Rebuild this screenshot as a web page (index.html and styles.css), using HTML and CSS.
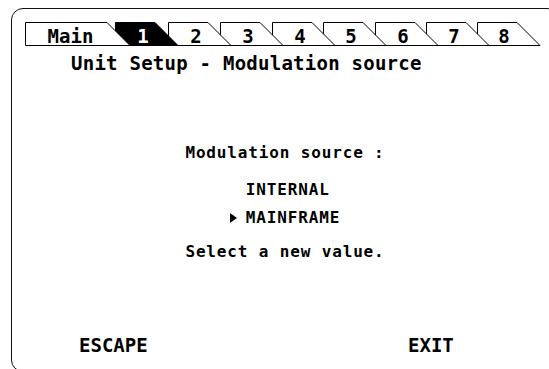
FILE: index.html
```html
<!DOCTYPE html>
<html lang="en">
<head>
    <meta charset="UTF-8">
    <meta name="viewport" content="width=device-width, initial-scale=1.0">
    <title>Unit Setup - Modulation source</title>
    <link rel="stylesheet" href="styles.css">
</head>
<body>
    <div class="screen">
        <!-- tab strip: drawn last-to-first so each tab overlaps the next one -->
        <svg class="tabs" width="530" height="26" viewBox="24 21 530 26">
            <polygon class="tab" points="477.5,45.5 477.5,22.5 517,22.5 540,45.5"/>
            <polygon class="tab" points="426.5,45.5 426.5,22.5 466,22.5 489,45.5"/>
            <polygon class="tab" points="375.5,45.5 375.5,22.5 415,22.5 438,45.5"/>
            <polygon class="tab" points="323.5,45.5 323.5,22.5 363,22.5 386,45.5"/>
            <polygon class="tab" points="272.5,45.5 272.5,22.5 312,22.5 335,45.5"/>
            <polygon class="tab" points="220.5,45.5 220.5,22.5 260,22.5 283,45.5"/>
            <polygon class="tab" points="168.5,45.5 168.5,22.5 208,22.5 231,45.5"/>
            <polygon class="tab tab-active" points="115.5,45.5 115.5,22.5 155,22.5 178,45.5"/>
            <polygon class="tab" points="25.5,45.5 25.5,22.5 107,22.5 130,45.5"/>
            <text class="tab-label" x="70.5" y="43">Main</text>
            <text class="tab-label tab-label-active" x="143" y="43">1</text>
            <text class="tab-label" x="196" y="43">2</text>
            <text class="tab-label" x="248" y="43">3</text>
            <text class="tab-label" x="300" y="43">4</text>
            <text class="tab-label" x="351" y="43">5</text>
            <text class="tab-label" x="403" y="43">6</text>
            <text class="tab-label" x="454" y="43">7</text>
            <text class="tab-label" x="504" y="43">8</text>
        </svg>

        <h1 class="title">Unit Setup - Modulation source</h1>

        <div class="prompt">
            <p class="prompt-label">Modulation source :</p>
            <ul class="options">
                <li><span class="marker"></span>INTERNAL</li>
                <li class="selected"><span class="marker"></span>MAINFRAME</li>
            </ul>
            <p class="prompt-hint">Select a new value.</p>
        </div>

        <div class="softkeys">
            <span>ESCAPE</span>
            <span>EXIT</span>
        </div>
    </div>
</body>
</html>
```

FILE: styles.css
```css
html, body {
    height: 100%;
    overflow: hidden;
}
body {
    margin: 0;
    background: #fff;
    color: #000;
    font-family: "DejaVu Sans Mono", monospace;
    font-weight: bold;
}
.screen {
    margin: 8px 0 0 11px;
    width: 546px;
    height: 362px;
    border: 1px solid #111;
    border-radius: 12px;
}
.tabs {
    display: block;
    margin: 12px 0 0 12px;
}
.tab {
    fill: #fff;
    stroke: #000;
    stroke-width: 1;
}
.tab-active {
    fill: #000;
}
.tab-label {
    font-family: "DejaVu Sans Mono", monospace;
    font-weight: bold;
    font-size: 19px;
    text-anchor: middle;
    fill: #000;
}
.tab-label-active {
    fill: #fff;
}
.title {
    margin: 5px 0 0;
    padding-left: 59px;
    font-size: 19px;
    line-height: 22px;
    letter-spacing: 0.25px;
}
.prompt {
    margin-top: 69px;
    text-align: center;
    font-size: 16px;
    letter-spacing: 0.85px;
}
.prompt-label,
.prompt-hint {
    margin: 0;
    line-height: 20px;
}
.options {
    list-style: none;
    width: fit-content;
    margin: 13px auto 0;
    padding: 0;
    text-align: left;
}
.options li {
    display: flex;
    align-items: center;
    line-height: 28px;
}
.marker {
    width: 16px;
    flex: none;
}
.selected .marker::before {
    content: "";
    display: block;
    width: 0;
    height: 0;
    border-left: 7px solid #000;
    border-top: 5px solid transparent;
    border-bottom: 5px solid transparent;
}
.prompt-hint {
    margin-top: 10px;
}
.softkeys {
    display: grid;
    grid-template-columns: 329px auto;
    margin-top: 72px;
    padding-left: 67px;
    font-size: 19px;
    line-height: 22px;
}
```
